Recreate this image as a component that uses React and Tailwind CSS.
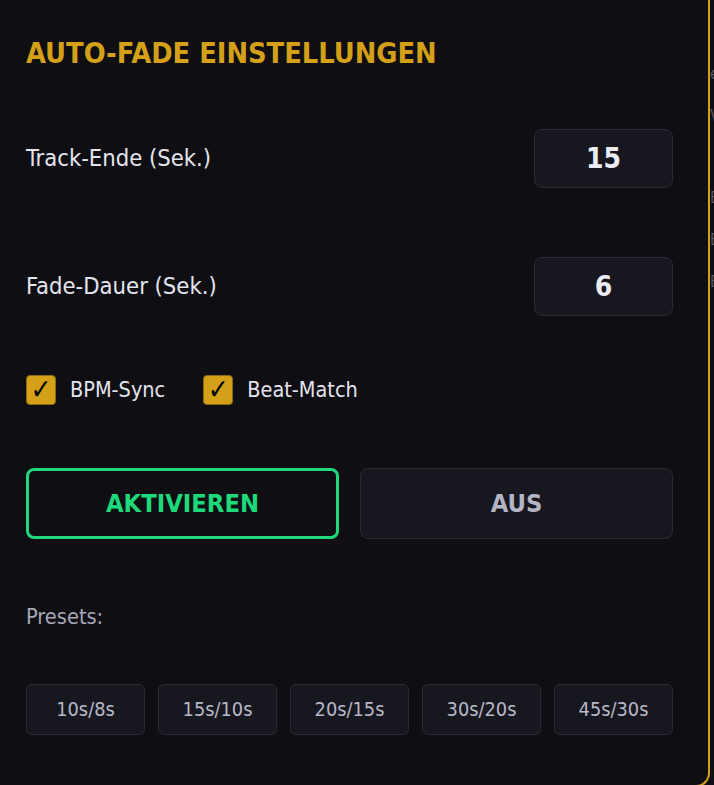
import { useState } from "react";

const presets = ["10s/8s", "15s/10s", "20s/15s", "30s/20s", "45s/30s"];

const Check = ({ label, checked, onToggle }) => (
  <button type="button" onClick={onToggle} className="flex items-center gap-[14px] h-[30px]">
    <span className="w-[30px] h-[30px] rounded-[4px] bg-[#d4a017] border border-[#8a6a10] flex items-center justify-center text-black text-[28px] leading-none font-bold">
      {checked ? "✓" : ""}
    </span>
    <span className="text-[21.5px] leading-[30px] text-[#e4e4ee]">{label}</span>
  </button>
);

const App = () => {
  const [trackEnd, setTrackEnd] = useState("15");
  const [fade, setFade] = useState("6");
  const [bpm, setBpm] = useState(true);
  const [beat, setBeat] = useState(true);

  return (
    <div
      className="h-[785px] w-[714px] overflow-hidden flex bg-[#0e0e13]"
      style={{ fontFamily: '"DejaVu Sans Condensed", "DejaVu Sans", sans-serif' }}
    >
      <div className="w-[710px] shrink-0 h-[787px] flex flex-col pl-[26px] pr-[35px] pt-[36px] border-r-2 border-b-2 border-[#d4a017] rounded-br-[14px] bg-[#0e0e13]">
        <h2 className="text-[28.7px] leading-[34px] font-bold text-[#d4a017]">AUTO-FADE EINSTELLUNGEN</h2>

        <div className="mt-[59px] flex items-center justify-between">
          <span className="text-[23.6px] text-[#e4e4ee]">Track-Ende (Sek.)</span>
          <input
            value={trackEnd}
            onChange={(e) => setTrackEnd(e.target.value)}
            className="w-[139px] h-[59px] rounded-[8px] bg-[#171720] border border-[#2a2a35] text-center text-[28px] font-bold text-[#ececf4] outline-none"
          />
        </div>

        <div className="mt-[69px] flex items-center justify-between">
          <span className="text-[23.6px] text-[#e4e4ee]">Fade-Dauer (Sek.)</span>
          <input
            value={fade}
            onChange={(e) => setFade(e.target.value)}
            className="w-[139px] h-[59px] rounded-[8px] bg-[#171720] border border-[#2a2a35] text-center text-[28px] font-bold text-[#ececf4] outline-none"
          />
        </div>

        <div className="mt-[59px] flex items-center gap-[38px]">
          <Check label="BPM-Sync" checked={bpm} onToggle={() => setBpm(!bpm)} />
          <Check label="Beat-Match" checked={beat} onToggle={() => setBeat(!beat)} />
        </div>

        <div className="mt-[63px] grid grid-cols-2 gap-[21px]">
          <button className="h-[71px] rounded-[8px] border-[3px] border-[#1ed97a] text-[25.3px] font-bold text-[#1ed97a]">
            AKTIVIEREN
          </button>
          <button className="h-[71px] rounded-[8px] bg-[#171720] border border-[#2a2a35] text-[25.3px] font-bold text-[#b4b4c4]">
            AUS
          </button>
        </div>

        <div className="mt-[65px] text-[21.6px] leading-[26px] text-[#a8a8b8]">Presets:</div>

        <div className="mt-[54px] grid grid-cols-5 gap-[13px]">
          {presets.map((p) => (
            <button
              key={p}
              className="h-[51px] rounded-[6px] bg-[#171720] border border-[#2a2a35] text-[19.8px] text-[#b8b8c8]"
            >
              {p}
            </button>
          ))}
        </div>
      </div>
      <div className="flex-1 overflow-hidden flex flex-col text-[16px] text-[#55555f] pt-[62px] gap-[18px]">
        <span>e</span>
        <span>V</span>
        <span className="mt-[40px]">E</span>
        <span>E</span>
        <span>E</span>
      </div>
    </div>
  );
};

export default App;
